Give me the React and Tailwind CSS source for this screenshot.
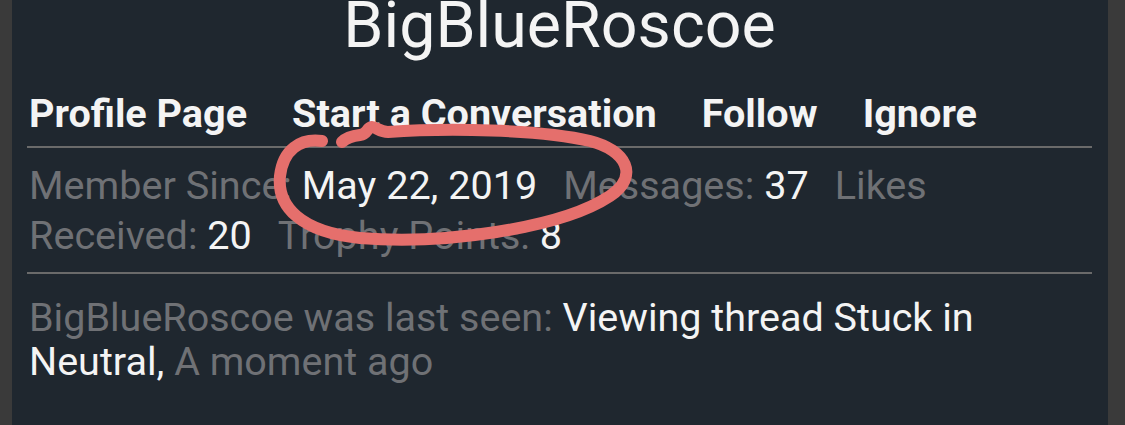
import React from "react";

const stats = [
  { label: "Member Since:", value: "May 22, 2019" },
  { label: "Messages:", value: "37" },
  { label: "Likes Received:", value: "20" },
  { label: "Trophy Points:", value: "8" },
];

const actions = ["Profile Page", "Start a Conversation", "Follow", "Ignore"];

function Scribble() {
  return (
    <svg
      className="pointer-events-none absolute left-0 top-0"
      width="1125"
      height="425"
      viewBox="0 0 1125 425"
      fill="none"
    >
      <path
        d="M322 141 C300 138 283 150 280 176 C277 206 300 232 360 238 C440 245 560 229 610 196 C640 176 626 150 590 141 C540 129 445 128 388 132 C380 132 376 127 372 127 C366 128 368 134 360 135 C352 136 346 138 342 142"
        stroke="#e56f6c"
        strokeWidth="12"
        strokeLinecap="round"
        strokeLinejoin="round"
      />
    </svg>
  );
}

export default function App() {
  return (
    <div
      className="relative flex h-[425px] w-[1125px] overflow-hidden bg-[#3a3a3a]"
      style={{ fontFamily: "Roboto, 'Noto Sans', sans-serif" }}
    >
      <div className="ml-[12px] mr-[17px] flex-1 bg-[#1f272f] pl-[15px] pr-[16px]">
        <h1 className="text-center text-[64.5px] leading-[50px] text-[#f4f4f4]">
          BigBlueRoscoe
        </h1>

        <nav className="mt-[42px] flex gap-[45px] pl-[2px] text-[39.6px] font-bold leading-[44px] text-[#f4f4f4]">
          {actions.map((a) => (
            <span key={a}>{a}</span>
          ))}
        </nav>

        <div className="mt-[10px] h-[2px] bg-[#6a6a6a]" />

        <p className="mt-[13px] pl-[2px] text-[39.6px] leading-[50px] text-[#6f7175]">
          {stats.map((s) => (
            <span key={s.label} className="mr-[26px]">
              {s.label} <span className="text-[#f4f4f4]">{s.value}</span>
            </span>
          ))}
        </p>

        <div className="mt-[11px] h-[2px] bg-[#6a6a6a]" />

        <p className="mt-[22px] pl-[2px] text-[39.5px] leading-[44px] text-[#6f7175]">
          BigBlueRoscoe was last seen:{" "}
          <span className="text-[#f4f4f4]">Viewing thread Stuck in Neutral,</span>{" "}
          A moment ago
        </p>
      </div>
      <Scribble />
    </div>
  );
}
